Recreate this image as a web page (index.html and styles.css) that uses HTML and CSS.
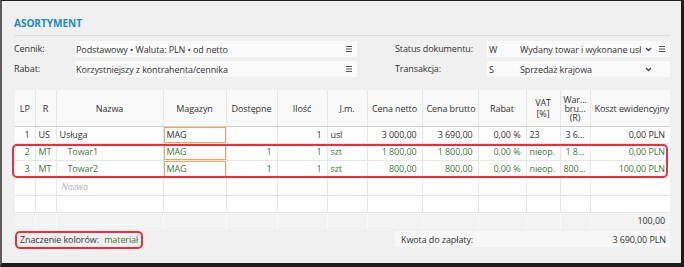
FILE: index.html
```html
<!DOCTYPE html>
<html lang="pl">
<head>
    <meta charset="UTF-8">
    <title>Asortyment</title>
    <link rel="stylesheet" href="styles.css">
</head>
<body>

<div class="window">
    <h2 class="section-title">ASORTYMENT</h2>

    <div class="params">
        <span class="param-label">Cennik:</span>
        <div class="field">
            <span class="field-text">Podstawowy • Waluta: PLN • od netto</span>
            <svg class="icon-menu" width="6" height="6" viewBox="0 0 6 6"><path d="M0 .5h6M0 3h6M0 5.5h6" stroke="#555" stroke-width="1"/></svg>
        </div>
        <span></span>
        <span class="param-label">Status dokumentu:</span>
        <div class="field">
            <span class="field-code">W</span>
            <span class="field-text">Wydany towar i wykonane usługi</span>
            <svg class="icon-chevron" width="7" height="5" viewBox="0 0 7 5"><path d="M1 1l2.5 2.5L6 1" fill="none" stroke="#444" stroke-width="1.3"/></svg>
            <svg class="icon-menu" width="6" height="6" viewBox="0 0 6 6"><path d="M0 .5h6M0 3h6M0 5.5h6" stroke="#555" stroke-width="1"/></svg>
        </div>

        <span class="param-label">Rabat:</span>
        <div class="field">
            <span class="field-text">Korzystniejszy z kontrahenta/cennika</span>
            <svg class="icon-menu" width="6" height="6" viewBox="0 0 6 6"><path d="M0 .5h6M0 3h6M0 5.5h6" stroke="#555" stroke-width="1"/></svg>
        </div>
        <span></span>
        <span class="param-label">Transakcja:</span>
        <div class="field">
            <span class="field-code">S</span>
            <span class="field-text">Sprzedaż krajowa</span>
            <svg class="icon-chevron" width="7" height="5" viewBox="0 0 7 5"><path d="M1 1l2.5 2.5L6 1" fill="none" stroke="#444" stroke-width="1.3"/></svg>
            <span class="icon-slot"></span>
        </div>
    </div>

    <div class="grid-wrap">
        <table class="items">
            <colgroup>
                <col style="width:20px"><col style="width:21px"><col style="width:107px">
                <col style="width:63px"><col style="width:51px"><col style="width:50px">
                <col style="width:40px"><col style="width:55px"><col style="width:56px">
                <col style="width:48px"><col style="width:34px"><col style="width:30px">
                <col style="width:80px">
            </colgroup>
            <thead>
                <tr>
                    <th>LP</th>
                    <th>R</th>
                    <th>Nazwa</th>
                    <th>Magazyn</th>
                    <th>Dostępne</th>
                    <th>Ilość</th>
                    <th>J.m.</th>
                    <th>Cena netto</th>
                    <th>Cena brutto</th>
                    <th>Rabat</th>
                    <th class="two-line">VAT<br>[%]</th>
                    <th class="three-line">War...<br>bru...<br>(R)</th>
                    <th>Koszt ewidencyjny</th>
                </tr>
            </thead>
            <tbody>
                <tr>
                    <td class="num">1</td>
                    <td>US</td>
                    <td>Usługa</td>
                    <td class="store">MAG</td>
                    <td class="num"></td>
                    <td class="num">1</td>
                    <td>usl</td>
                    <td class="num">3 000,00</td>
                    <td class="num">3 690,00</td>
                    <td class="num">0,00 %</td>
                    <td>23</td>
                    <td class="num">3 6...</td>
                    <td class="num">0,00 PLN</td>
                </tr>
                <tr class="material">
                    <td class="num">2</td>
                    <td>MT</td>
                    <td class="child">Towar1</td>
                    <td class="store">MAG</td>
                    <td class="num">1</td>
                    <td class="num">1</td>
                    <td>szt</td>
                    <td class="num">1 800,00</td>
                    <td class="num">1 800,00</td>
                    <td class="num">0,00 %</td>
                    <td>nieop.</td>
                    <td class="num">1 8...</td>
                    <td class="num">0,00 PLN</td>
                </tr>
                <tr class="material">
                    <td class="num">3</td>
                    <td>MT</td>
                    <td class="child">Towar2</td>
                    <td class="store">MAG</td>
                    <td class="num">1</td>
                    <td class="num">1</td>
                    <td>szt</td>
                    <td class="num">800,00</td>
                    <td class="num">800,00</td>
                    <td class="num">0,00 %</td>
                    <td>nieop.</td>
                    <td class="num">800...</td>
                    <td class="num">100,00 PLN</td>
                </tr>
                <tr class="new-row">
                    <td></td><td></td>
                    <td class="placeholder">Nazwa</td>
                    <td></td><td></td><td></td><td></td><td></td><td></td><td></td><td></td><td></td><td></td>
                </tr>
                <tr class="empty-row">
                    <td></td><td></td><td></td><td></td><td></td><td></td><td></td><td></td><td></td><td></td><td></td><td></td><td></td>
                </tr>
            </tbody>
            <tfoot>
                <tr>
                    <td></td><td></td><td></td><td></td><td></td><td></td><td></td><td></td><td></td><td></td><td></td><td></td>
                    <td class="num">100,00</td>
                </tr>
            </tfoot>
        </table>
        <!-- zaznaczenie wierszy z materiałem -->
        <div class="row-highlight"></div>
    </div>

    <div class="summary">
        <div class="legend">
            Znaczenie kolorów:
            <span class="legend-material">materiał</span>
        </div>
        <div class="total">
            <span>Kwota do zapłaty:</span>
            <span>3 690,00 PLN</span>
        </div>
    </div>
</div>

</body>
</html>
```

FILE: styles.css
```css
body {
    margin: 0;
    font-family: "Open Sans", "Noto Sans", Arial, sans-serif;
    font-size: 9px;
    letter-spacing: -0.1px;
    color: #333;
    background-color: #f0f0f0;
}

.window {
    box-sizing: border-box;
    width: 684px;
    height: 267px;
    padding: 15px 11px 0 12px;
    border-top: 1px solid #222;
    border-left: 2px solid #5c5c5c;
    border-right: 3px solid #1c1c1c;
    border-bottom: 4px solid #1c1c1c;
    background-color: #f0f0f0;
}

.section-title {
    margin: 0;
    font-size: 10px;
    line-height: 14px;
    font-weight: bold;
    letter-spacing: 0;
    color: #1b89c8;
    padding-bottom: 5px;
    border-bottom: 1px solid #dcdcdc;
}

/* parametry dokumentu */
.params {
    display: grid;
    grid-template-columns: 61px 282px 38px 92px 183px;
    grid-template-rows: 16px 16px;
    row-gap: 4px;
    margin-top: 5px;
    align-items: center;
}

.param-label {
    line-height: 16px;
}

.field {
    display: flex;
    align-items: center;
    height: 16px;
    padding: 0 5px 0 1px;
    background-color: #fafafa;
    white-space: nowrap;
}

.field-code {
    width: 31px;
    flex: none;
    padding-left: 1px;
}

.field-text {
    flex: 1;
    overflow: hidden;
    text-overflow: clip;
}

.icon-chevron {
    flex: none;
    margin: 0 7px 0 4px;
}

.icon-menu, .icon-slot {
    flex: none;
    width: 6px;
}

/* tabela pozycji */
.grid-wrap {
    position: relative;
    margin: 13px 0 0 1px;
}

.items {
    table-layout: fixed;
    width: 655px;
    border-collapse: collapse;
    background-color: #fff;
}

.items th, .items td {
    padding: 0 4px;
    border: 1px solid #e7e7e7;
    white-space: nowrap;
    overflow: hidden;
}

.items th {
    height: 36px;
    font-weight: normal;
    background-color: #f9f9f9;
    border-top: none;
    border-bottom-color: #cfcfcf;
    line-height: 11px;
}

.items th:first-child, .items td:first-child {
    border-left: none;
}

.items th:last-child, .items td:last-child {
    border-right: none;
}

.items th.three-line {
    line-height: 9px;
    padding: 0;
}

.items td {
    height: 16px;
    line-height: 16px;
    padding: 0 3px;
}

.items td.num {
    text-align: right;
    padding-right: 5px;
}

.items td.store {
    box-shadow: inset 0 0 0 1px #f0a55c;
}

.items td.child {
    padding-left: 11px;
}

.items .material td {
    color: #3c7a34;
}

.items td.placeholder {
    color: #b4b4b4;
    font-style: italic;
    padding-left: 5px;
}

.items tr.new-row td {
    height: 17px;
}

.items tfoot td {
    height: 15px;
    background-color: #f3f3f3;
    border-top: 1px solid #b8b8b8;
    border-left-color: #fafafa;
    border-right-color: #fafafa;
    border-bottom: none;
}

.row-highlight {
    position: absolute;
    left: -3px;
    top: 54px;
    width: 652px;
    height: 30px;
    border: 2px solid #e8303a;
    border-radius: 5px;
}

/* podsumowanie */
.summary {
    display: flex;
    justify-content: space-between;
    align-items: flex-start;
    margin-top: 2px;
}

.legend {
    height: 14px;
    line-height: 14px;
    padding: 0 3px;
    margin-left: 1px;
    border: 2px solid #e8303a;
    border-radius: 5px;
}

.legend-material {
    margin-left: 3px;
    color: #3c7a34;
}

.total {
    box-sizing: border-box;
    width: 275px;
    height: 16px;
    display: flex;
    justify-content: space-between;
    align-items: center;
    padding: 0 4px 0 6px;
    background-color: #f7f7f7;
}
```
